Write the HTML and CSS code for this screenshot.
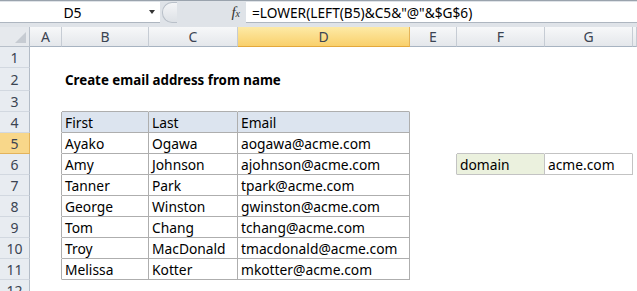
FILE: index.html
```html
<!DOCTYPE html>
<html lang="en">
<head>
<meta charset="UTF-8" />
<title>Create email address from name</title>
<link rel="stylesheet" href="styles.css">
</head>
<body>
<div class="formula-bar">
    <div class="name-box"><span class="cell-ref">D5</span><span class="drop"></span></div>
    <div class="fx-area"><span class="grip"></span><span class="fx"><i>f</i><small>x</small></span></div>
    <div class="formula">=LOWER(LEFT(B5)&amp;C5&amp;"@"&amp;$G$6)</div>
</div>
<table class="sheet">
    <colgroup>
        <col class="c-row">
        <col class="c-a">
        <col class="c-b">
        <col class="c-c">
        <col class="c-d">
        <col class="c-e">
        <col class="c-f">
        <col class="c-g">
        <col>
    </colgroup>
    <thead>
        <tr>
            <th class="corner"><span class="tri"></span></th>
            <th class="col">A</th>
            <th class="col">B</th>
            <th class="col">C</th>
            <th class="col active">D</th>
            <th class="col">E</th>
            <th class="col">F</th>
            <th class="col">G</th>
            <th class="col"></th>
        </tr>
    </thead>
    <tbody>
        <tr><th class="row">1</th><td></td><td></td><td></td><td></td><td></td><td></td><td></td><td></td></tr>
        <tr><th class="row">2</th><td></td><td class="title" colspan="3">Create email address from name</td><td></td><td></td><td></td><td></td></tr>
        <tr><th class="row">3</th><td></td><td class="edge-b"></td><td class="edge-b"></td><td class="edge-b"></td><td></td><td></td><td></td><td></td></tr>
        <tr class="head"><th class="row">4</th><td class="edge-r"></td><td class="t">First</td><td class="t">Last</td><td class="t">Email</td><td></td><td></td><td></td><td></td></tr>
        <tr><th class="row active">5</th><td class="edge-r"></td><td class="t">Ayako</td><td class="t">Ogawa</td><td class="t">aogawa@acme.com</td><td></td><td class="edge-b2"></td><td class="edge-b2"></td><td></td></tr>
        <tr><th class="row">6</th><td class="edge-r"></td><td class="t">Amy</td><td class="t">Johnson</td><td class="t">ajohnson@acme.com</td><td class="edge-r2"></td><td class="d key">domain</td><td class="d">acme.com</td><td></td></tr>
        <tr><th class="row">7</th><td class="edge-r"></td><td class="t">Tanner</td><td class="t">Park</td><td class="t">tpark@acme.com</td><td></td><td></td><td></td><td></td></tr>
        <tr><th class="row">8</th><td class="edge-r"></td><td class="t">George</td><td class="t">Winston</td><td class="t">gwinston@acme.com</td><td></td><td></td><td></td><td></td></tr>
        <tr><th class="row">9</th><td class="edge-r"></td><td class="t">Tom</td><td class="t">Chang</td><td class="t">tchang@acme.com</td><td></td><td></td><td></td><td></td></tr>
        <tr><th class="row">10</th><td class="edge-r"></td><td class="t">Troy</td><td class="t">MacDonald</td><td class="t">tmacdonald@acme.com</td><td></td><td></td><td></td><td></td></tr>
        <tr><th class="row">11</th><td class="edge-r"></td><td class="t">Melissa</td><td class="t">Kotter</td><td class="t">mkotter@acme.com</td><td></td><td></td><td></td><td></td></tr>
        <tr><th class="row">12</th><td></td><td></td><td></td><td></td><td></td><td></td><td></td><td></td></tr>
    </tbody>
</table>
</body>
</html>
```

FILE: styles.css
```css
body { margin: 0; background: #fff; color: #000; font-family: "Noto Sans", Arial, sans-serif; overflow: hidden; }

/* formula bar */
.formula-bar { display: flex; height: 27px; box-sizing: border-box; background: #dfe3e8; border-top: 1px solid #9aa3ad; padding: 1px 0 4px; }
.name-box { width: 160px; background: #fff; border-bottom: 1px solid #aeb6c0; display: flex; align-items: center; }
.cell-ref { width: 145px; text-align: center; font-size: 14px; }
.drop { width: 0; height: 0; border-left: 3px solid transparent; border-right: 3px solid transparent; border-top: 4px solid #333; margin-left: 4px; }
.fx-area { width: 86px; display: flex; align-items: center; justify-content: space-between; padding: 0 6px 0 2px; box-sizing: border-box; }
.grip { width: 14px; height: 19px; border: 1px solid #b9c0c9; border-right: none; border-radius: 10px 0 0 10px; background: linear-gradient(#f4f5f7, #dde1e6); }
.fx { font-family: "Liberation Serif", serif; font-size: 15px; color: #333; }
.fx small { font-size: 10px; font-style: italic; }
.formula { flex: 1; background: #fff; border-bottom: 1px solid #aeb6c0; font-size: 13.7px; line-height: 21px; padding-left: 6px; white-space: nowrap; }

/* sheet grid */
.sheet { table-layout: fixed; width: 100%; border-collapse: separate; border-spacing: 0; font-size: 13.8px; }
.c-row { width: 30px; }
.c-a { width: 32px; }
.c-b { width: 87px; }
.c-c { width: 89px; }
.c-d { width: 172px; }
.c-e { width: 47px; }
.c-f { width: 88px; }
.c-g { width: 88px; }

.sheet th, .sheet td { padding: 0; box-sizing: border-box; white-space: nowrap; overflow: hidden; }
.sheet td { height: 21px; padding-left: 3px; border-right: 1px solid #fff; border-bottom: 1px solid #fff; line-height: 19px; }

.corner { height: 20px; background: #e6e9ed; border-right: 1px solid #b8c0ca; border-bottom: 1px solid #b8c0ca; position: relative; }
.tri { position: absolute; right: 3px; bottom: 3px; width: 0; height: 0; border-left: 11px solid transparent; border-bottom: 11px solid #c6cbd2; }
.col { height: 20px; font-weight: normal; font-size: 14px; color: #3b4452; background: linear-gradient(#f7f8f9, #e4e7eb); border-right: 1px solid #c6ccd4; border-bottom: 1px solid #a7b3c1; }
.col.active { background: linear-gradient(#fdeaa6, #f9d06c); border-right-color: #e5b458; border-bottom-color: #e3a83c; }
.row { font-weight: normal; font-size: 14px; color: #3b4452; background: #e8ecf1; border-right: 1px solid #b3bcc7; border-bottom: 1px solid #d2d8e0; }
.row.active { background: #f8d78a; border-bottom-color: #e3b35b; border-right-color: #e3b35b; }

.sheet td.title { font-weight: bold; font-size: 13.3px; padding-top: 3px; }

/* data table */
.sheet td.t { border-right-color: #aeaeae; border-bottom-color: #aeaeae; }
.sheet td.edge-r { border-right-color: #aeaeae; }
.sheet td.edge-b { border-bottom-color: #aeaeae; }
.head td.t { background: #dce4ef; }

/* lookup cell */
.sheet td.d { border-right-color: #c3c3c3; border-bottom-color: #c3c3c3; }
.sheet td.edge-r2 { border-right-color: #c3c3c3; }
.sheet td.edge-b2 { border-bottom-color: #c3c3c3; }
.sheet td.key { background: #ebf1de; }
```
